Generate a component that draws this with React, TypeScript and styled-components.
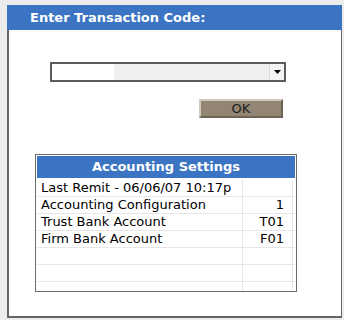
import styled, { createGlobalStyle } from "styled-components"

const GlobalStyle = createGlobalStyle`
  html, body {
    margin: 0;
    padding: 0;
    background: #ececec;
  }
  body {
    font-family: "DejaVu Sans", Verdana, sans-serif;
  }
`

const rows = [
  { label: "Last Remit - 06/06/07 10:17p", value: "" },
  { label: "Accounting Configuration", value: "1" },
  { label: "Trust Bank Account", value: "T01" },
  { label: "Firm Bank Account", value: "F01" },
  { label: "", value: "" },
  { label: "", value: "" },
  { label: "", value: "" },
]

const App = () => {
  return (
    <>
      <GlobalStyle />
      <Frame>
        <Panel>
          <PanelHeader>Enter Transaction Code:</PanelHeader>
          <PanelBody>
            <Combo>
              <ComboBlank />
              <ComboFill />
              <ComboButton>
                <svg width="7" height="4" viewBox="0 0 7 4">
                  <path d="M0 0h7L3.5 4z" fill="#000" />
                </svg>
              </ComboButton>
            </Combo>
            <OkRow>
              <OkButton>OK</OkButton>
            </OkRow>
            <Settings>
              <SettingsTitle>Accounting Settings</SettingsTitle>
              {rows.map((row, i) => (
                <Row key={i}>
                  <Label>{row.label}</Label>
                  <Value>{row.value}</Value>
                  <Spare />
                </Row>
              ))}
            </Settings>
          </PanelBody>
        </Panel>
      </Frame>
    </>
  )
}

const Frame = styled.div`
  width: 344px;
  height: 320px;
  box-sizing: border-box;
  padding: 2px 1px 0 3px;
  display: flex;
`

const Panel = styled.div`
  flex: 1;
  margin: 3px 1px 2px 4px;
  background: #fff;
  border-left: 2px solid #666;
  border-right: 1px solid #666;
  border-bottom: 2px solid #666;
  display: flex;
  flex-direction: column;
`

const PanelHeader = styled.div`
  height: 25px;
  margin-left: -2px;
  margin-right: -1px;
  background: #3a74c2;
  color: #fff;
  font-weight: bold;
  font-size: 13px;
  line-height: 25px;
  padding-left: 23px;
`

const PanelBody = styled.div`
  display: flex;
  flex-direction: column;
  padding: 32px 0 0 41px;
`

const Combo = styled.div`
  width: 236px;
  height: 20px;
  box-sizing: border-box;
  border: 2px solid #5c5c5c;
  display: flex;
`

const ComboBlank = styled.div`
  width: 62px;
  background: #fff;
`

const ComboFill = styled.div`
  flex: 1;
  background: #efefef;
`

const ComboButton = styled.div`
  width: 15px;
  box-sizing: border-box;
  background: #f4f4f4;
  border-left: 1px solid #d8d8d8;
  display: grid;
  place-items: center;
`

const OkRow = styled.div`
  width: 233px;
  display: flex;
  justify-content: flex-end;
  margin-top: 17px;
`

const OkButton = styled.div`
  width: 84px;
  height: 19px;
  box-sizing: border-box;
  background: #928574;
  border: 2px solid;
  border-color: #cfc8bd #6e6456 #6e6456 #cfc8bd;
  color: #1c1c1c;
  font-family: "DejaVu Sans", Verdana, sans-serif;
  font-size: 13px;
  line-height: 15px;
  text-align: center;
`

const Settings = styled.div`
  width: 262px;
  height: 138px;
  box-sizing: border-box;
  margin: 36px 0 0 -15px;
  border: 1px solid #6a6a6a;
  padding: 1px;
  overflow: hidden;
  font-size: 13px;
  color: #000;
`

const SettingsTitle = styled.div`
  height: 22px;
  margin-bottom: 2px;
  background: #3a74c2;
  color: #fff;
  font-weight: bold;
  text-align: center;
  line-height: 22px;
`

const Row = styled.div`
  display: grid;
  grid-template-columns: 206px 50px 1fr;
  height: 17px;
  box-sizing: border-box;
  border-bottom: 1px solid #e6e6e6;
`

const Label = styled.div`
  padding-left: 4px;
  line-height: 16px;
  white-space: nowrap;
  border-right: 1px solid #e6e6e6;
`

const Value = styled.div`
  padding-right: 8px;
  text-align: right;
  line-height: 16px;
  border-right: 1px solid #e6e6e6;
`

const Spare = styled.div``

export default App
